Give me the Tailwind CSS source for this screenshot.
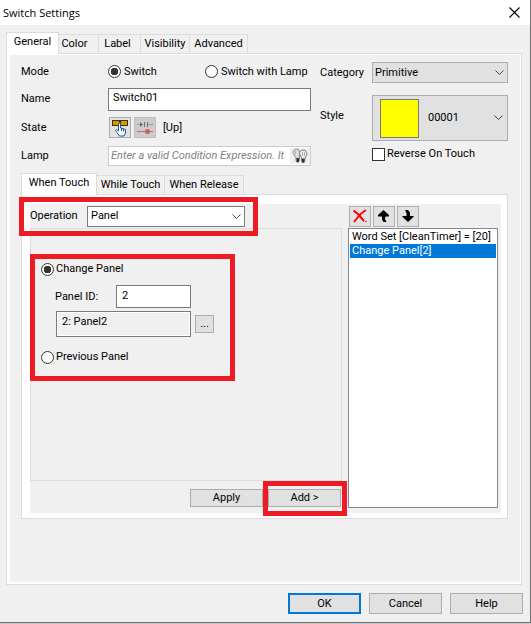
<!DOCTYPE html>
<html lang="en">
<head>
<meta charset="utf-8">
<meta name="viewport" content="width=device-width, initial-scale=1">
<title>Switch Settings</title>
<script src="https://cdn.jsdelivr.net/npm/@tailwindcss/browser@4"></script>
</head>
<body class="bg-[#c8c8c8] font-[Roboto,'Liberation_Sans',sans-serif] text-[11px] leading-4 text-black">
<main class="flex min-h-[623px] flex-col border-r border-b border-[#707070] bg-[#f0f0f0]">
  <header class="flex h-[25px] items-center justify-between bg-white pr-[10px] pl-[3px]">
    <h1 class="font-['Open_Sans','Noto_Sans',sans-serif] text-[11px]">Switch Settings</h1>
    <button type="button" aria-label="Close" class="flex size-[11px] items-center justify-center">
      <svg width="11" height="11" viewBox="0 0 11 11" fill="none" stroke="#000" stroke-width="1.1"><path d="M.5 .5l10 10M10.500 .5l-10 10"/></svg>
    </button>
  </header>

  <div class="flex flex-1 flex-col pt-[7px] pr-[7px] pb-2 pl-[6px]">
    <!-- Main tabs -->
    <div role="tablist" class="flex items-end">
      <button role="tab" aria-selected="true" type="button" class="z-10 -mb-px h-[22px] w-[53px] border border-b-0 border-[#dcdcdc] bg-white pb-1">General</button>
      <button role="tab" type="button" class="h-[19px] w-[40px] border-t border-r border-[#dcdcdc] pr-2">Color</button>
      <button role="tab" type="button" class="h-[19px] w-[42px] border-t border-r border-[#dcdcdc] pr-1">Label</button>
      <button role="tab" type="button" class="h-[19px] w-[49px] border-t border-r border-[#dcdcdc]">Visibility</button>
      <button role="tab" type="button" class="h-[19px] w-[58px] border-t border-r border-[#dcdcdc]">Advanced</button>
    </div>

    <section class="mr-px flex flex-1 flex-col border border-[#dcdcdc] bg-white pt-px pr-px pb-[2px] pl-[3px]">
      <div class="flex flex-1 flex-col bg-[#f0f0f0] pr-[12px] pl-[11px]">
        <div class="flex justify-between pt-[3px]">
          <!-- Left form column -->
          <div class="grid w-[290px] grid-cols-[87px_1fr] grid-rows-[27px_28px_29px_27px] items-center">
            <span>Mode</span>
            <div class="flex items-center whitespace-nowrap">
              <label class="flex w-[97px] items-center gap-[3px]"><input type="radio" name="mode" checked class="size-[13px] appearance-none rounded-full border border-[#333] bg-white bg-radial from-[#333] from-[3.5px] to-white to-[4px]">Switch</label>
              <label class="flex items-center gap-[3px]"><input type="radio" name="mode" class="size-[13px] appearance-none rounded-full border border-[#333] bg-white">Switch with Lamp</label>
            </div>
            <label for="name">Name</label>
            <input id="name" type="text" value="Switch01" class="h-[23px] w-full border border-[#7a7a7a] bg-white px-1 pb-[3px]">
            <span>State</span>
            <div class="flex items-center gap-[3px] pl-px">
              <button type="button" aria-label="Touch state" class="flex h-[21px] w-[22px] items-center justify-center border border-[#adadad] bg-[#e1e1e1]">
                <svg width="18" height="18" viewBox="0 0 18 18"><path d="M1 1h16v6H1z" fill="#3a3000"/><path d="M2 2h6v4H2zM10 2h6v4h-6z" fill="#d09a00"/><path d="M7.500 4.500q1-1 2 0V9l5 1.500V14L13 17H8.500L4.500 11.500l1-1 2 1.500z" fill="#fff" stroke="#1f5c99"/><path d="M10.500 9v3M12.500 9.500v3" stroke="#1f5c99"/></svg>
              </button>
              <button type="button" aria-label="Lamp state" class="flex h-[21px] w-[22px] items-center justify-center border border-[#bfbfbf] bg-[#cccccc]">
                <svg width="18" height="18" viewBox="0 0 18 18"><path d="M1 5.500h3M12 5.500h5" stroke="#7aa874"/><path d="M4 3l3 2.500L4 8zM8 3h1v5H8zM11 3h1v5h-1z" fill="#5f7a5c"/><path d="M1 12.500h16" stroke="#c96a6a"/><circle cx="11.500" cy="12.500" r="2.500" fill="#c75f5f"/></svg>
              </button>
              <span class="pl-1">[Up]</span>
            </div>
            <label for="lamp">Lamp</label>
            <div class="flex h-[20px] items-center border border-[#cccccc] bg-white">
              <input id="lamp" type="text" placeholder="Enter a valid Condition Expression. It" class="h-full w-0 flex-1 pl-[2px] italic placeholder:text-[#808080]">
              <button type="button" aria-label="Browse" class="flex h-[16px] w-[20px] items-center justify-center bg-[#f0f0f0]">
                <svg width="16" height="16" viewBox="0 0 16 16"><path d="M4.500 1C1.500 1 .5 4 1.500 6L4 9.500V13l2 1.500 1.500-2V9L8 4Q7 1 4.500 1z" fill="#ddd" stroke="#888"/><path d="M11 2C8 2 7 5 8 7l1.500 3v3.500l2 1 1.500-2V10l2-3.500Q15 2 11 2z" fill="#eee" stroke="#777"/><path d="M4.500 10h2.500v4H4.500zM10 10.500h2.500v4H10z" fill="#333"/><path d="M3.500 3v3M10.500 4v4M12.500 4v4" stroke="#aaa"/></svg>
              </button>
            </div>
          </div>

          <!-- Right form column -->
          <div class="mt-1 grid w-[188px] grid-cols-[52px_1fr] content-start items-center">
            <label for="category">Category</label>
            <div class="relative">
              <select id="category" class="block h-[21px] w-full appearance-none border border-[#adadad] bg-[#e1e1e1] pl-[2px]"><option>Primitive</option></select>
              <svg class="pointer-events-none absolute top-2 right-1" width="9" height="6" viewBox="0 0 9 6" fill="none" stroke="#444"><path d="M.5 .5l4 4 4-4"/></svg>
            </div>
            <span class="pt-2">Style</span>
            <button type="button" class="mt-3 flex h-[46px] items-center justify-between border border-[#adadad] bg-[#e1e1e1] pr-1 pl-[7px]">
              <span class="flex items-center gap-[9px]"><span class="size-[39px] border border-[#7a7a7a] bg-[#ffff00]"></span>00001</span>
              <svg width="9" height="6" viewBox="0 0 9 6" fill="none" stroke="#444"><path d="M.5 .5l4 4 4-4"/></svg>
            </button>
            <label class="col-start-2 mt-[5px] flex items-center gap-[2px]"><input type="checkbox" class="size-[13px] appearance-none border border-[#333] bg-white">Reverse On Touch</label>
          </div>
        </div>

        <!-- Event tabs -->
        <div role="tablist" class="mt-1 flex h-[21px] items-end">
          <button role="tab" aria-selected="true" type="button" class="z-10 -mb-px h-[22px] w-[76px] border border-b-0 border-[#dcdcdc] bg-white pb-1">When Touch</button>
          <button role="tab" type="button" class="h-[19px] w-[68px] border-t border-r border-[#dcdcdc]">While Touch</button>
          <button role="tab" type="button" class="h-[19px] w-[79px] border-t border-r border-[#dcdcdc]">When Release</button>
        </div>

        <section class="flex h-[325px] border border-[#dcdcdc] bg-white pt-[9px] pr-[6px] pb-[5px] pl-2">
          <div class="flex flex-1 bg-[#f0f0f0] pr-[3px]">
            <div class="flex flex-1 flex-col">
              <div class="relative flex h-6 items-center">
                <label for="operation" class="w-[57px]">Operation</label>
                <div class="relative w-[158px]">
                  <select id="operation" class="block h-[21px] w-full appearance-none border border-[#7a7a7a] bg-white pl-[3px]"><option>Panel</option></select>
                  <svg class="pointer-events-none absolute top-2 right-1" width="9" height="6" viewBox="0 0 9 6" fill="none" stroke="#444"><path d="M.5 .5l4 4 4-4"/></svg>
                </div>
                <div class="pointer-events-none absolute -top-[7px] -left-[11px] z-10 h-[39px] w-[239px] border-[5px] border-[#ed1c24]"></div>
              </div>

              <div class="mr-[6px] h-[253px] border border-[#dcdcdc] pt-[25px]">
                <div class="-ml-px flex h-[127px] w-[205px] flex-col border-[5px] border-[#ed1c24] px-[6px] pt-[2px]">
                  <label class="flex h-[16px] items-center gap-[2px]"><input type="radio" name="panel" checked class="size-[13px] appearance-none rounded-full border border-[#333] bg-white bg-radial from-[#333] from-[3.5px] to-white to-[4px]">Change Panel</label>
                  <div class="mt-2 flex items-center pl-[14px]">
                    <label for="panel-id" class="w-[61px]">Panel ID:</label>
                    <input id="panel-id" type="text" value="2" class="h-[23px] w-[75px] border border-[#7a7a7a] bg-white px-[5px] pb-[3px]">
                  </div>
                  <div class="mt-[3px] flex items-center gap-1 pl-[15px]">
                    <input type="text" readonly aria-label="Panel name" value="2: Panel2" class="h-[26px] w-[135px] border border-[#7a7a7a] bg-[#f0f0f0] px-[5px] pb-[6px] inset-ring inset-ring-white">
                    <button type="button" class="h-[18px] w-[19px] border border-[#adadad] bg-[#e1e1e1] leading-4">...</button>
                  </div>
                  <label class="mt-3 flex h-[16px] items-center gap-[2px]"><input type="radio" name="panel" class="size-[13px] appearance-none rounded-full border border-[#333] bg-white">Previous Panel</label>
                </div>
              </div>

              <div class="flex h-[32px] items-center justify-end gap-[5px] pt-[2px] pr-[7px]">
                <button type="button" class="h-[18px] w-[73px] border border-[#adadad] bg-[#e1e1e1]">Apply</button>
                <div class="relative flex">
                  <button type="button" class="h-[18px] w-[73px] border border-[#adadad] bg-[#e1e1e1]">Add &gt;</button>
                  <div class="pointer-events-none absolute -top-2 -right-[6px] -bottom-[9px] -left-[5px] border-[5px] border-[#ed1c24]"></div>
                </div>
              </div>
            </div>

            <div class="flex w-[150px] flex-col pb-[5px]">
              <div class="flex h-6 items-center gap-[2px] pl-px">
                <button type="button" aria-label="Delete" class="flex h-[21px] w-[22px] items-center justify-center border border-[#adadad] bg-[#e1e1e1]">
                  <svg width="14" height="14" viewBox="0 0 14 14" fill="none" stroke="#f00" stroke-width="2"><path d="M.5 1.500L5 5l6 7M13 1Q8 4 5 8L1 13"/><path d="M12 12.500h1.500" stroke-width="1"/></svg>
                </button>
                <button type="button" aria-label="Move up" class="flex h-[21px] w-[22px] items-center justify-center border border-[#adadad] bg-[#e1e1e1]">
                  <svg width="12" height="12" viewBox="0 0 12 12"><path d="M5.500 0L11 5v1.500H7.500L7 9l1.500 3h-3L4 9.500v-3H0V5z"/></svg>
                </button>
                <button type="button" aria-label="Move down" class="flex h-[21px] w-[22px] items-center justify-center border border-[#adadad] bg-[#e1e1e1]">
                  <svg width="12" height="12" viewBox="0 0 12 12"><path d="M3 0h3l2 2.500V6h3.500v1L6 12 .5 7V6H4.500V3z"/></svg>
                </button>
              </div>
              <ul role="listbox" aria-label="Actions" class="flex-1 border border-[#828790] bg-white px-px pt-px leading-[14px]">
                <li role="option" class="pl-[2px] whitespace-nowrap">Word Set [CleanTimer] = [20]</li>
                <li role="option" aria-selected="true" class="bg-[#0078d7] pl-[2px] whitespace-nowrap text-white">Change Panel[2]</li>
              </ul>
            </div>
          </div>
        </section>
      </div>
    </section>

    <footer class="mt-2 flex justify-end gap-2">
      <button type="button" class="h-[21px] w-[73px] border-2 border-[#0078d7] bg-[#e1e1e1] leading-4">OK</button>
      <button type="button" class="h-[21px] w-[73px] border border-[#adadad] bg-[#e1e1e1]">Cancel</button>
      <button type="button" class="h-[21px] w-[73px] border border-[#adadad] bg-[#e1e1e1]">Help</button>
    </footer>
  </div>
</main>
</body>
</html>
